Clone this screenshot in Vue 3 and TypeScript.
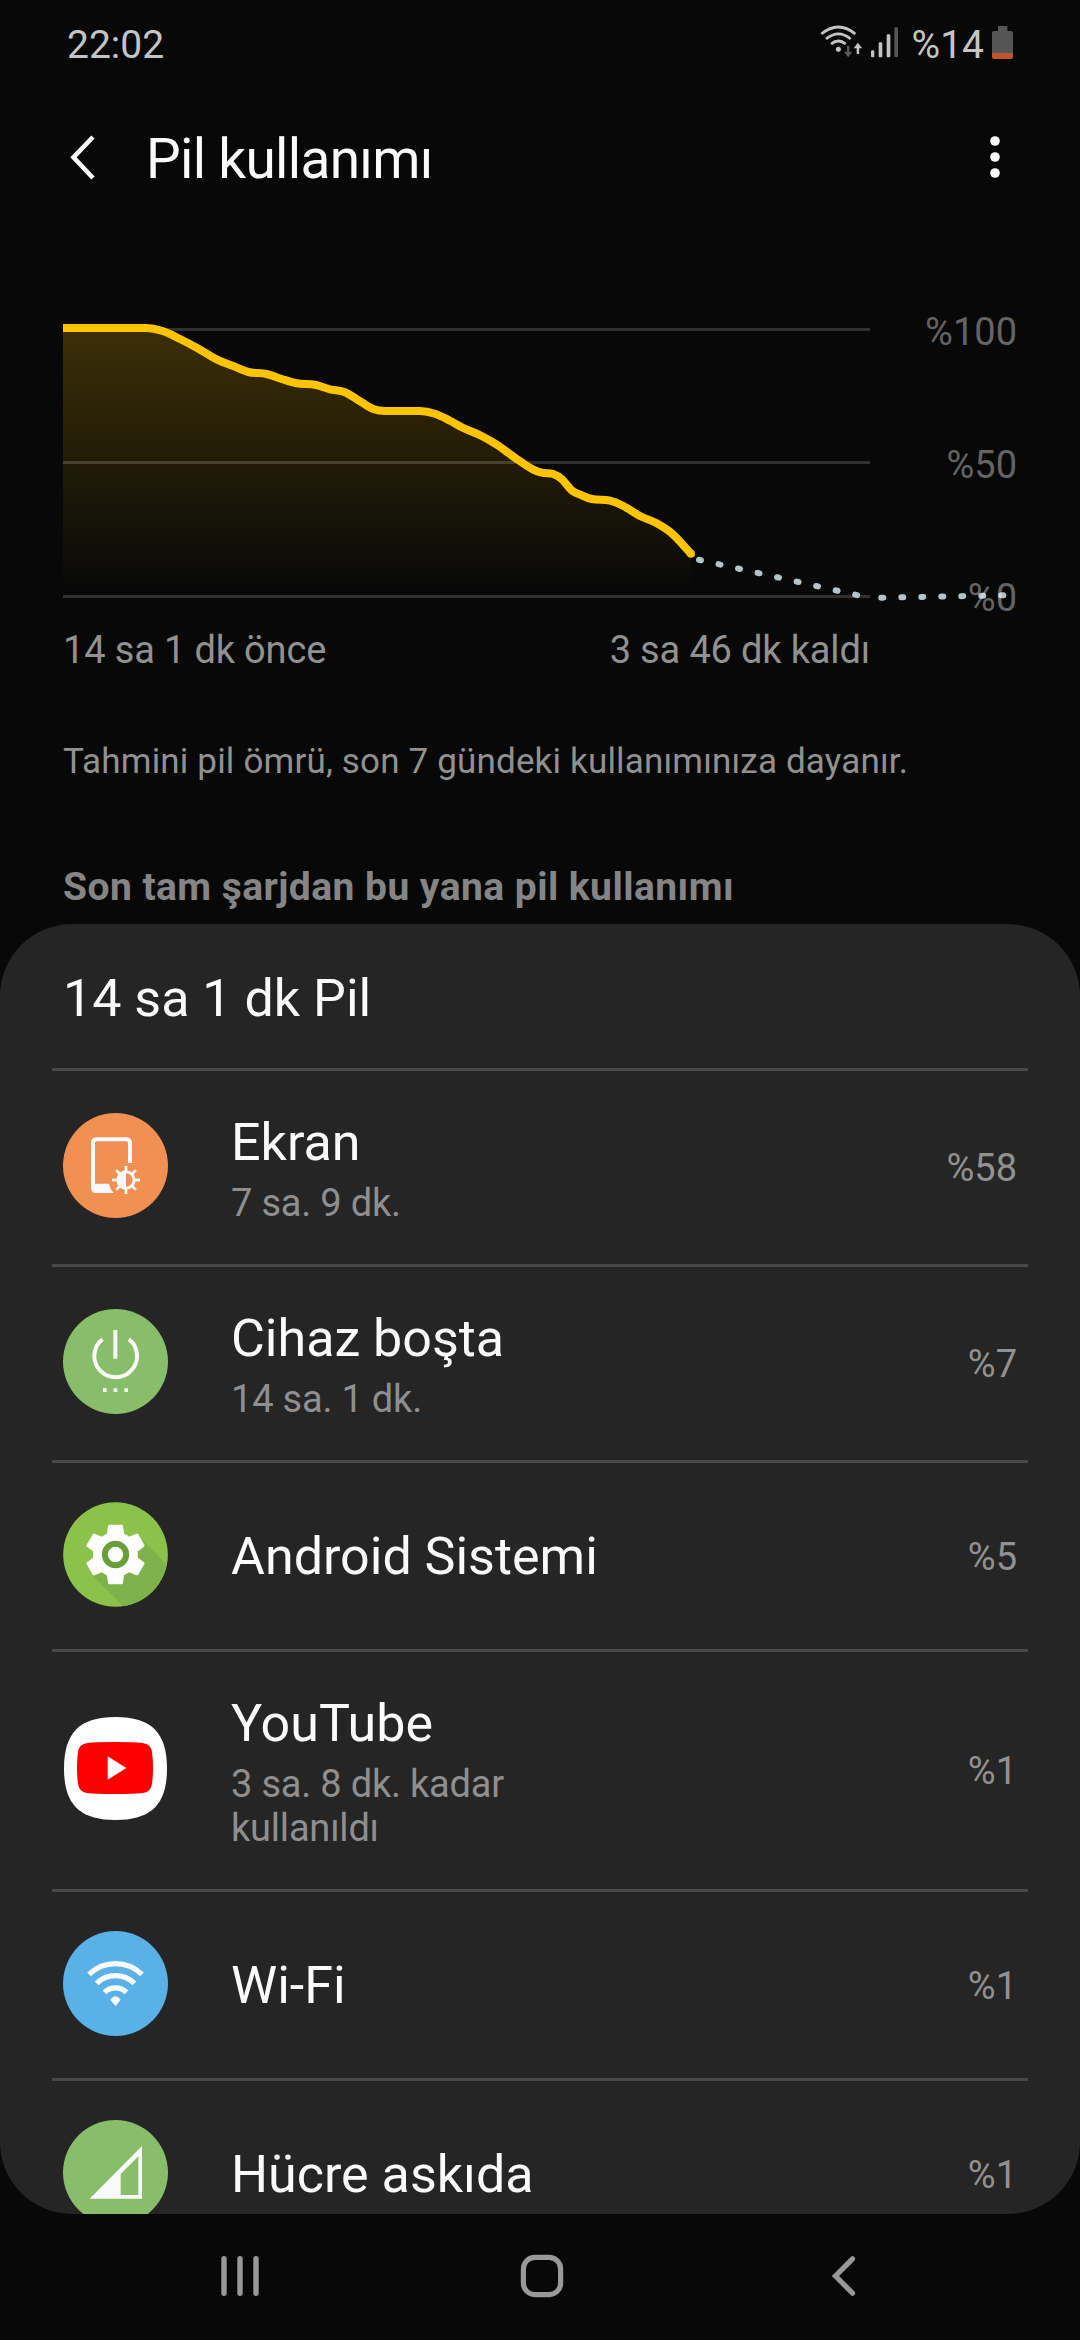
<script setup lang="ts">
type IconName = 'screen' | 'power' | 'android' | 'youtube' | 'wifi' | 'cell'

interface UsageItem {
  icon: IconName
  name: string
  detail?: string
  percent: number
}

type Point = [number, number]

const items: UsageItem[] = [
  { icon: 'screen', name: 'Ekran', detail: '7 sa. 9 dk.', percent: 58 },
  { icon: 'power', name: 'Cihaz boşta', detail: '14 sa. 1 dk.', percent: 7 },
  { icon: 'android', name: 'Android Sistemi', percent: 5 },
  { icon: 'youtube', name: 'YouTube', detail: '3 sa. 8 dk. kadar kullanıldı', percent: 1 },
  { icon: 'wifi', name: 'Wi-Fi', percent: 1 },
  { icon: 'cell', name: 'Hücre askıda', percent: 1 },
]

const scale = [100, 50, 0]

const history: Point[] = [
  [63, 328], [145, 328], [163.3, 331.3], [180, 339], [196.7, 347.7], [216.7, 359.3],
  [233.3, 366], [248.3, 372], [266.7, 374], [281.7, 379], [296.7, 383.3], [315, 384.7],
  [330, 389.3], [345, 392.3], [360, 401.3], [373.3, 409], [385, 411], [420, 411],
  [435, 413.7], [450, 420.7], [463.3, 428], [481.7, 436], [496.7, 444.7], [516.7, 459],
  [533.3, 469.7], [541.7, 472.7], [553.3, 474], [561.7, 479], [571.7, 490.3], [581.7, 495.3],
  [591.7, 499], [610, 500.7], [623.3, 506], [640, 516], [656.7, 523.3], [671.7, 533.3],
  [691, 553.7],
]

// Smooth curve through the samples; flat stretches stay flat.
function curve(points: Point[]): string {
  const slope = (i: number) =>
    (points[i + 1][1] - points[i][1]) / (points[i + 1][0] - points[i][0])
  const tangents = points.map((_, i) => {
    if (i === 0) return slope(0)
    if (i === points.length - 1) return slope(i - 1)
    const a = slope(i - 1)
    const b = slope(i)
    return a * b <= 0 ? 0 : (a + b) / 2
  })
  let d = `M${points[0][0]} ${points[0][1]}`
  for (let i = 0; i < points.length - 1; i++) {
    const [x0, y0] = points[i]
    const [x1, y1] = points[i + 1]
    const h = (x1 - x0) / 3
    d += `C${x0 + h} ${y0 + tangents[i] * h} ${x1 - h} ${y1 - tangents[i + 1] * h} ${x1} ${y1}`
  }
  return d
}

const linePath = curve(history)
const areaPath = `${linePath}V598H63Z`
const rays = [0, 45, 90, 135, 180, 225, 270, 315]
</script>

<template>
  <div class="phone">
    <header class="status">
      <span class="clock">22:02</span>
      <div class="status-icons">
        <svg class="s-wifi" viewBox="117 72 129 102" width="43" height="34">
          <g fill="none" stroke="#c4c4c4" stroke-width="8">
            <path d="M121 102Q172 60 223 102" />
            <path d="M135 117Q172 86 209 117" />
            <path d="M150 132Q172 114 194 132" />
          </g>
          <circle cx="172" cy="148" r="7.5" fill="#c4c4c4" />
          <path d="M198 138h7v17h9l-12.500 17-12.500-17h9z" fill="#5a5a5a" />
          <path d="M227 162v-17h-9l12.500-17 13 17h-9v17z" fill="#c4c4c4" />
        </svg>
        <svg class="s-signal" viewBox="267 78 87 96" width="29" height="32">
          <g fill="#c4c4c4">
            <rect x="270" y="151" width="10" height="21" rx="4" />
            <rect x="293" y="127" width="11" height="45" rx="4" />
            <rect x="317" y="103" width="11" height="69" rx="4" />
          </g>
          <rect x="340" y="82" width="11" height="90" rx="4" fill="#565656" />
        </svg>
        <span class="level">%14</span>
        <svg class="s-battery" viewBox="636 78 63 99" width="21" height="33">
          <path d="M654 78h28v15h12q5 0 5 5v61h-63V98q0-5 5-5h13z" fill="#555" />
          <path d="M636 159h63v12q0 6-6 6h-51q-6 0-6-6z" fill="#bd5530" />
        </svg>
      </div>
    </header>

    <div class="titlebar">
      <svg class="back" viewBox="0 0 30 46" width="30" height="46">
        <path d="M27 3L7.500 23.300 27 44" fill="none" stroke="#fafafa" stroke-width="4.600" />
      </svg>
      <h1>Pil kullanımı</h1>
      <svg class="more" viewBox="0 0 12 44" width="12" height="44" fill="#fafafa">
        <circle cx="6" cy="6" r="4.800" />
        <circle cx="6" cy="22" r="4.800" />
        <circle cx="6" cy="38" r="4.800" />
      </svg>
    </div>

    <section class="chart">
      <svg class="plot" viewBox="63 310 954 311" width="954" height="311">
        <defs>
          <linearGradient id="fade" gradientUnits="userSpaceOnUse" x1="0" y1="328" x2="0" y2="592">
            <stop offset="0" stop-color="#ffc400" stop-opacity="0.21" />
            <stop offset="1" stop-color="#ffc400" stop-opacity="0" />
          </linearGradient>
        </defs>
        <path :d="areaPath" fill="url(#fade)" />
        <g fill="#fff" fill-opacity="0.17">
          <rect x="63" y="328" width="807" height="3" />
          <rect x="63" y="461" width="807" height="3" />
          <rect x="63" y="595" width="807" height="3" />
        </g>
        <g fill="none" stroke="#b4c2c9" stroke-width="6" stroke-linecap="round" stroke-dasharray="2 18">
          <path d="M699 559.800L858 595.300" />
          <path d="M881.300 597.700L1004 595.300" />
        </g>
        <path :d="linePath" fill="none" stroke="#ffc400" stroke-width="8" />
        <circle cx="691" cy="553.700" r="4" fill="#ffc400" />
      </svg>
      <div class="scale">
        <span v-for="value in scale" :key="value">%{{ value }}</span>
      </div>
    </section>

    <div class="range">
      <span>14 sa 1 dk önce</span>
      <span>3 sa 46 dk kaldı</span>
    </div>
    <p class="note">Tahmini pil ömrü, son 7 gündeki kullanımınıza dayanır.</p>
    <h2>Son tam şarjdan bu yana pil kullanımı</h2>

    <main class="card">
      <div class="card-head">14 sa 1 dk Pil</div>
      <div v-for="item in items" :key="item.name" class="row" :class="{ single: !item.detail }">
        <svg class="icon" viewBox="0 0 315 315" width="105" height="105">
          <template v-if="item.icon === 'screen'">
            <circle cx="157.500" cy="157.500" r="157.500" fill="#f09053" />
            <path d="M201 150V90q0-11-11-11H101q-11 0-11 11V225" fill="none" stroke="#fafafa" stroke-width="12" />
            <path d="M84 212h54q3 16 14 28H99q-15 0-15-15z" fill="#fafafa" />
            <circle cx="189" cy="201" r="24.500" fill="none" stroke="#fafafa" stroke-width="9" />
            <path d="M189 174a27 27 0 0 0 0 54z" fill="#fafafa" />
            <rect
              v-for="angle in rays"
              :key="angle"
              x="185"
              y="159"
              width="8"
              height="16"
              fill="#fafafa"
              :transform="`rotate(${angle} 189 201)`"
            />
          </template>
          <template v-else-if="item.icon === 'power'">
            <circle cx="157.500" cy="157.500" r="157.500" fill="#88bd69" />
            <path d="M118.500 90.500A64 64 0 1 0 197.500 90.500" fill="none" stroke="#fafafa" stroke-width="12" />
            <path d="M151 63h12v86h-12zM120 238h11v11h-11zM152 238h11v11h-11zM184 238h11v11h-11z" fill="#fafafa" />
          </template>
          <template v-else-if="item.icon === 'android'">
            <clipPath id="disc"><circle cx="157.500" cy="157.500" r="157" /></clipPath>
            <circle cx="157.500" cy="157.500" r="157" fill="#8bc34a" />
            <path d="M92 224L238 114 400 276 300 432z" fill="#7eb24a" clip-path="url(#disc)" />
            <path
              transform="translate(50.100 50.100) scale(8.950)"
              fill="#fff"
              d="M19.430 12.980c.04-.32.07-.64.07-.98s-.03-.66-.07-.98l2.110-1.650c.19-.15.24-.42.12-.64l-2-3.460c-.12-.22-.39-.3-.61-.22l-2.490 1c-.52-.4-1.080-.73-1.690-.98l-.38-2.650C14.460 2.180 14.250 2 14 2h-4c-.25 0-.46.18-.49.42l-.38 2.650c-.61.25-1.170.59-1.690.98l-2.490-1c-.23-.09-.49 0-.61.22l-2 3.460c-.13.22-.07.49.12.64l2.110 1.650c-.04.32-.07.65-.07.98s.03.66.07.98l-2.110 1.650c-.19.15-.24.42-.12.64l2 3.460c.12.22.39.3.61.22l2.490-1c.52.4 1.080.73 1.690.98l.38 2.650c.03.24.24.42.49.42h4c.25 0 .46-.18.49-.42l.38-2.650c.61-.25 1.170-.59 1.690-.98l2.490 1c.23.09.49 0 .61-.22l2-3.460c.12-.22.07-.49-.12-.64l-2.110-1.650z"
            />
            <circle cx="157.500" cy="157.500" r="32" fill="#fff" stroke="#689f38" stroke-width="18" />
          </template>
          <template v-else-if="item.icon === 'youtube'">
            <path d="M157.500 3C265 3 312 50 312 157.500S265 312 157.500 312 3 265 3 157.500 50 3 157.500 3z" fill="#fff" />
            <path d="M156 78q60 0 82 3 27 3 29 28 3 20 3 47t-3 47q-2 25-29 28-22 3-82 3t-82-3q-27-3-29-28-3-20-3-47t3-47q2-25 29-28 22-3 82-3z" fill="#f00" />
            <path d="M134 121l56 35-56 35z" fill="#fff" />
          </template>
          <template v-else-if="item.icon === 'wifi'">
            <circle cx="157.500" cy="157.500" r="157.500" fill="#5ab1e8" />
            <g fill="none" stroke="#fafafa" stroke-width="16">
              <path d="M78 130A114 114 0 0 1 237 130" />
              <path d="M101 157A81 81 0 0 1 214 157" />
              <path d="M124.500 184A47 47 0 0 1 190.500 184" />
            </g>
            <path d="M142 206q15.500-20 31 0l-15.500 19.500z" fill="#fafafa" />
          </template>
          <template v-else>
            <circle cx="157.500" cy="157.500" r="157.500" fill="#88bd69" />
            <path d="M80 236L237 78V236zM173 162V225H226V109z" fill="#fafafa" fill-rule="evenodd" />
          </template>
        </svg>
        <div class="text">
          <div class="name">{{ item.name }}</div>
          <div v-if="item.detail" class="detail">{{ item.detail }}</div>
        </div>
        <span class="percent">%{{ item.percent }}</span>
      </div>
    </main>

    <nav class="navbar">
      <svg viewBox="0 0 44 44" width="44" height="44">
        <path d="M6 4.800V39.200M22 4.800V39.200M38 4.800V39.200" stroke="#999" stroke-width="5.400" stroke-linecap="round" />
      </svg>
      <svg viewBox="0 0 44 44" width="44" height="44">
        <rect x="3.400" y="3.400" width="37.200" height="37.200" rx="11.500" fill="none" stroke="#999" stroke-width="5.200" />
      </svg>
      <svg viewBox="0 0 44 44" width="44" height="44">
        <path d="M30.500 4.800L13.500 22 30.500 39.200" fill="none" stroke="#999" stroke-width="5.200" stroke-linecap="round" />
      </svg>
    </nav>
  </div>
</template>

<style>
body {
  margin: 0;
  background: #080808;
}
</style>

<style scoped>
.phone {
  display: flex;
  flex-direction: column;
  width: 1080px;
  height: 2340px;
  overflow: hidden;
  background: #080808;
  color: #fafafa;
  font-family: Roboto, "Noto Sans", sans-serif;
}
svg {
  display: block;
  flex: none;
}
h1,
h2,
p {
  margin: 0;
  font-weight: 400;
}
.status {
  display: flex;
  justify-content: space-between;
  align-items: center;
  box-sizing: border-box;
  height: 88px;
  padding: 0 67px;
  color: #c4c4c4;
  font-size: 39px;
  line-height: 46px;
}
.clock,
.level {
  padding-top: 2px;
}
.status-icons {
  display: flex;
  align-items: center;
}
.s-wifi {
  margin: 0 7px 6px 0;
}
.s-signal {
  margin: 0 13px 4px 0;
}
.s-battery {
  margin: 0 0 3px 8px;
}
.titlebar {
  display: flex;
  align-items: center;
  height: 137px;
  padding: 0 79px 0 66px;
}
.titlebar h1 {
  flex: 1;
  padding: 4px 0 0 50px;
  font-size: 55px;
  letter-spacing: -0.700px;
  line-height: 66px;
}
.chart {
  display: grid;
  width: 954px;
  margin: 85px 0 0 63px;
}
.plot,
.scale {
  grid-area: 1 / 1;
}
.scale {
  display: flex;
  flex-direction: column;
  align-items: flex-end;
  gap: 88px;
  color: rgba(255, 255, 255, 0.38);
  font-size: 38px;
  line-height: 45px;
}
.range {
  display: flex;
  justify-content: space-between;
  width: 807px;
  margin: 7px 0 0 63px;
  color: #919191;
  font-size: 38px;
  letter-spacing: -0.150px;
  line-height: 45px;
}
.note {
  margin: 67px 0 0 63px;
  color: #919191;
  font-size: 35px;
  letter-spacing: 0.170px;
  line-height: 44px;
}
h2 {
  height: 45px;
  margin: 81px 0 14px 63px;
  color: #858585;
  font-size: 39px;
  font-weight: 700;
  letter-spacing: 0.450px;
  line-height: 45px;
}
.card {
  height: 1290px;
  flex: none;
  overflow: hidden;
  border-radius: 72px;
  background: #252525;
}
.card-head {
  box-sizing: border-box;
  height: 144px;
  padding: 45px 63px 0;
  font-size: 52px;
  line-height: 60px;
}
.row {
  display: flex;
  align-items: center;
  box-sizing: border-box;
  min-height: 196px;
  margin: 0 52px;
  padding: 0 11px;
  border-top: 3px solid #484848;
}
.row.single {
  min-height: 0;
  height: 189px;
}
.icon {
  margin-bottom: 4px;
}
.single .icon {
  margin-bottom: 3px;
}
.text {
  flex: 1;
  padding: 42px 0 39px 63px;
}
.single .text {
  padding: 1px 0 0 63px;
}
.name {
  font-size: 52px;
  line-height: 60px;
}
.detail {
  max-width: 320px;
  margin-top: 8px;
  color: #8f8f8f;
  font-size: 38px;
  letter-spacing: -0.200px;
  line-height: 44px;
}
.percent {
  padding-top: 1px;
  color: #919191;
  font-size: 38px;
  line-height: 45px;
}
.single .percent {
  padding-top: 2px;
}
.navbar {
  display: flex;
  justify-content: space-between;
  align-items: center;
  box-sizing: border-box;
  height: 126px;
  padding: 0 214px 2px 218px;
}
</style>
